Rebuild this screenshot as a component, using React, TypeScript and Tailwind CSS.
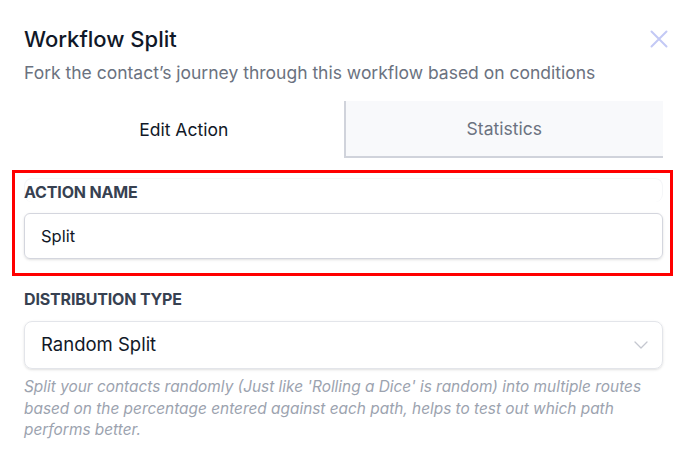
/**
 * Workflow split action editor panel
 */
const CloseIcon = () => (
  <svg width="18" height="18" viewBox="0 0 18 18" fill="none" stroke="currentColor" strokeWidth="2" strokeLinecap="round">
    <path d="M1.5 1.5l15 15M16.5 1.5l-15 15" />
  </svg>
)

const Chevron = () => (
  <svg width="14" height="8" viewBox="0 0 14 8" fill="none" stroke="currentColor" strokeWidth="1.3" strokeLinecap="round" strokeLinejoin="round">
    <path d="M1 1l6 6 6-6" />
  </svg>
)

export default function App() {
  return (
    <div className="w-[690px] h-[458px] bg-white overflow-hidden font-['Inter',sans-serif] text-gray-900">
      <div className="pl-6 pr-[27px] pt-[25px]">
        {/* Header */}
        <div className="flex items-start justify-between">
          <h1 className="text-[22px] leading-7 font-medium text-[#101828]">Workflow Split</h1>
          <button className="mt-[5px] -mr-[5px] text-[#c3c9f5]">
            <CloseIcon />
          </button>
        </div>
        <p className="mt-2 text-[17.5px] leading-6 text-[#6b7280]">
          Fork the contact’s journey through this workflow based on conditions
        </p>

        {/* Tabs */}
        <div className="mt-4 grid grid-cols-2 h-[57px]">
          <div className="flex items-center justify-center pt-px text-[17.5px] text-[#111827]">Edit Action</div>
          <div className="flex items-center justify-center pt-px text-[17.5px] text-[#6b7280] bg-[#f8f9fb] border-l-2 border-b-2 border-[#d0d3db]">
            Statistics
          </div>
        </div>
      </div>

      {/* Highlighted action name section */}
      <div className="ml-3 mr-[17px] mt-3 border-[3px] border-[#ff0000] pl-[9px] pr-[7px] pt-[5px] pb-[14px]">
        <div className="rounded-lg border border-[#f5f6f8] border-b-0 pt-[3px]">
          <label className="block -ml-px text-[16px] leading-5 font-bold text-[#374151] tracking-[-0.01em]">ACTION NAME</label>
        </div>
        <div className="mt-[11px] h-[46px] rounded-md border border-[#d4d6de] shadow-sm flex items-center px-4 text-[16.5px] text-[#111827]">
          Split
        </div>
      </div>

      {/* Distribution type */}
      <div className="pl-6 pr-[27px] pt-[13px]">
        <label className="block text-[16px] leading-5 font-bold text-[#374151] tracking-[-0.01em]">DISTRIBUTION TYPE</label>
        <div className="mt-3 h-[48px] rounded-lg border border-[#e3e5ea] shadow-sm flex items-center justify-between pl-4 pr-[14px]">
          <span className="text-[18.5px] text-[#111827]">Random Split</span>
          <span className="text-[#c4c7cf] flex"><Chevron /></span>
        </div>
        <p className="mt-[7px] text-[15.4px] leading-[21.5px] italic text-[#9ca3af]">
          Split your contacts randomly (Just like 'Rolling a Dice' is random) into multiple routes based on the percentage entered against each path, helps to test out which path performs better.
        </p>
      </div>
    </div>
  )
}
